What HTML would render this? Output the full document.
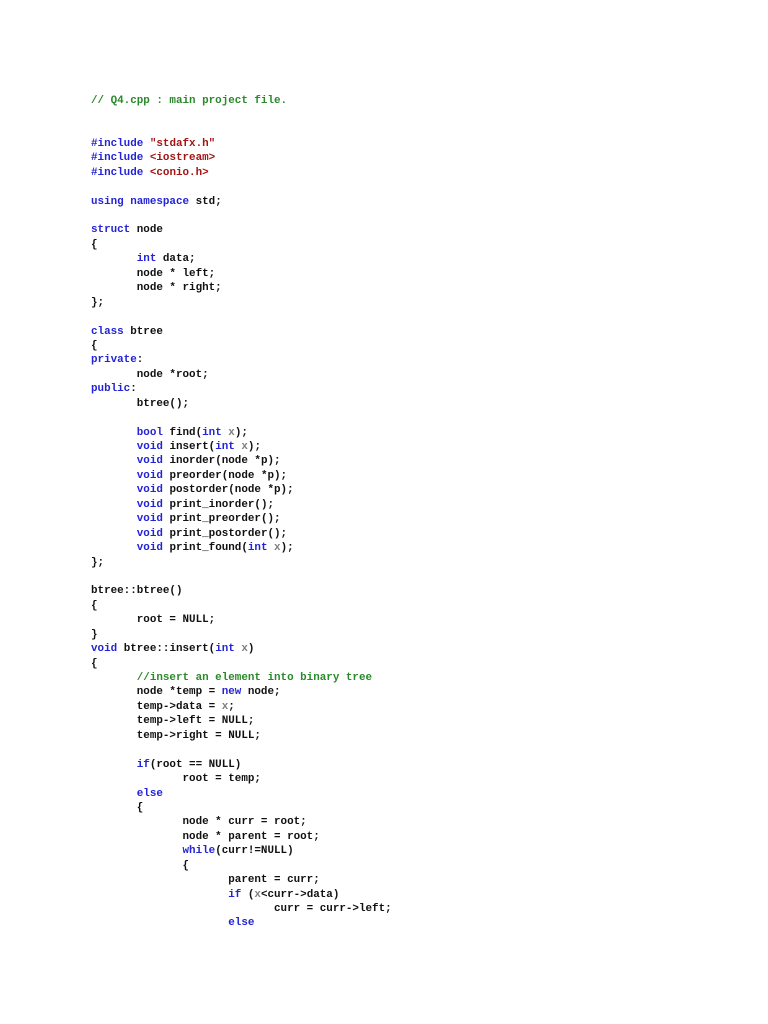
<!DOCTYPE html>
<html><head><meta charset="utf-8"><style>
html,body{margin:0;padding:0;background:#fff;width:768px;height:1024px;overflow:hidden}
pre{position:absolute;left:91px;top:93.5px;margin:0;font-family:"Liberation Mono",monospace;font-size:10.9px;line-height:14.44px;font-weight:bold;color:#111;tab-size:7;-moz-tab-size:7}
.k{color:#2323d8}.c{color:#2a8a2a}.s{color:#a31515}.p{color:#808080}
</style></head><body>
<pre><span class="c">// Q4.cpp : main project file.</span>


<span class="k">#include</span> <span class="s">"stdafx.h"</span>
<span class="k">#include</span> <span class="s">&lt;iostream&gt;</span>
<span class="k">#include</span> <span class="s">&lt;conio.h&gt;</span>

<span class="k">using namespace</span> std;

<span class="k">struct</span> node
{
	<span class="k">int</span> data;
	node * left;
	node * right;
};

<span class="k">class</span> btree
{
<span class="k">private</span>:
	node *root;
<span class="k">public</span>:
	btree();

	<span class="k">bool</span> find(<span class="k">int</span> <span class="p">x</span>);
	<span class="k">void</span> insert(<span class="k">int</span> <span class="p">x</span>);
	<span class="k">void</span> inorder(node *p);
	<span class="k">void</span> preorder(node *p);
	<span class="k">void</span> postorder(node *p);
	<span class="k">void</span> print_inorder();
	<span class="k">void</span> print_preorder();
	<span class="k">void</span> print_postorder();
	<span class="k">void</span> print_found(<span class="k">int</span> <span class="p">x</span>);
};

btree::btree()
{
	root = NULL;
}
<span class="k">void</span> btree::insert(<span class="k">int</span> <span class="p">x</span>)
{
	<span class="c">//insert an element into binary tree</span>
	node *temp = <span class="k">new</span> node;
	temp-&gt;data = <span class="p">x</span>;
	temp-&gt;left = NULL;
	temp-&gt;right = NULL;

	<span class="k">if</span>(root == NULL)
		root = temp;
	<span class="k">else</span>
	{
		node * curr = root;
		node * parent = root;
		<span class="k">while</span>(curr!=NULL)
		{
			parent = curr;
			<span class="k">if</span> (<span class="p">x</span>&lt;curr-&gt;data)
				curr = curr-&gt;left;
			<span class="k">else</span></pre>
</body></html>
